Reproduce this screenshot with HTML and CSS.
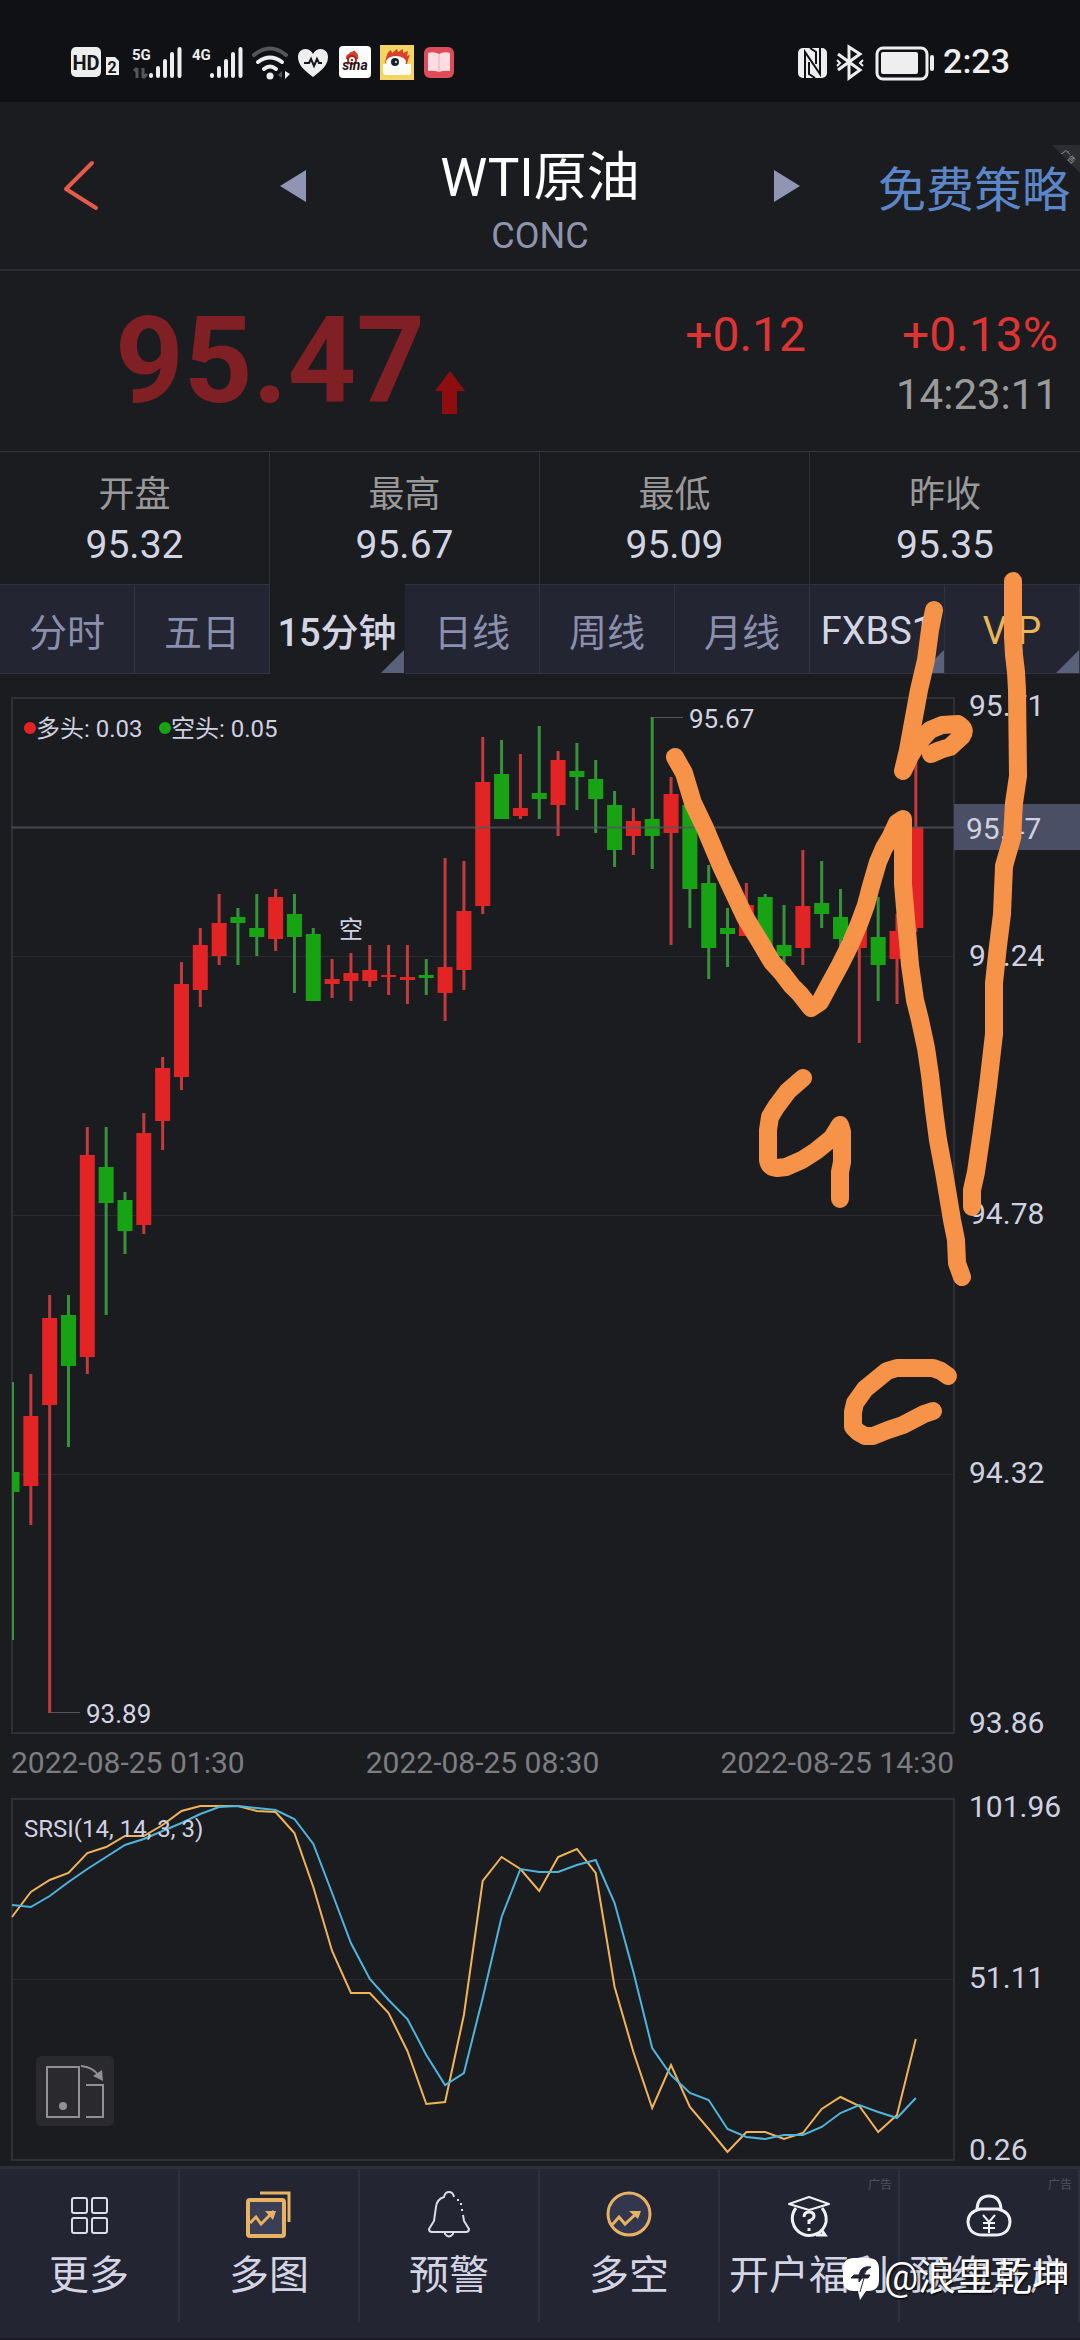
FILE: index.html
```html
<!DOCTYPE html>
<html lang="zh-CN">
<head>
    <meta charset="UTF-8">
    <meta name="viewport" content="width=device-width, initial-scale=1.0">
    <title>WTI原油 CONC</title>
    <link rel="stylesheet" href="styles.css">
</head>
<body>
    <div class="status-bar">
        <svg class="status-left" viewBox="70 40 390 42" width="390" height="42" aria-hidden="true">
            <rect x="71" y="47" width="30" height="30" rx="5" fill="#eee"/>
            <text x="86" y="70" class="st-hd">HD</text>
            <path d="M106 57h9l4 4v14h-13z" fill="#eee"/>
            <text x="112" y="73" class="st-sim">2</text>
            <text x="132" y="60" class="st-net">5G</text>
            <path d="M137 68v10M134 71l3-3M143 68v10M143 78l4-4" stroke="#55565a" stroke-width="3" fill="none"/>
            <path d="M151 75v1M158 68v8M165 61v15M172 54v22M179.500 49v27" class="bars"/>
            <text x="192" y="60" class="st-net">4G</text>
            <path d="M212 75v1M219 68v8M226 61v15M233 54v22M240.500 49v27" class="bars"/>
            <path d="M254 55q16-13 32 0" stroke="#55565a" stroke-width="4" fill="none" stroke-linecap="round"/>
            <path d="M258 62q12-9 24 0M264 69q6-5 12 0" stroke="#eee" stroke-width="4" fill="none" stroke-linecap="round"/>
            <circle cx="270" cy="76" r="3.500" fill="#eee"/>
            <path d="M278 75l4-4v7z" fill="#55565a"/>
            <path d="M285 71v8l5-5z" fill="#eee"/>
            <path d="M313 77C304 70 298 65 298 57c0-9 11-11 15-3 4-8 15-6 15 3 0 8-6 13-15 20z" fill="#eee"/>
            <path d="M304 63h5l2-4 3 7 3-7 2 4h3" stroke="#15161a" stroke-width="2" fill="none"/>
            <rect x="339" y="46" width="32" height="32" rx="4" fill="#fff"/>
            <path d="M346 59c0-7 3-3 4-7 2 1 3-2 5-1 2 3 4 3 3 8z" fill="#d0402e"/>
            <circle cx="352" cy="60" r="4" fill="#fff" stroke="#a22" stroke-width="2"/>
            <text x="355" y="70" class="st-sina">sina</text>
            <rect x="380" y="45" width="34" height="35" fill="#f2d564"/>
            <path d="M383 64h28v8q0 3-3 3h-22q-3 0-3-3z" fill="#fffdf4"/>
            <path d="M385 63q2-12 6-13l1 3 5-4 1 3 5-3 0 4 5-2-1 5 3-1q-2 4-3 9z" fill="#d8402a"/>
            <ellipse cx="396" cy="62" rx="10" ry="6" fill="#fff"/>
            <circle cx="395" cy="62" r="4" fill="#16242c"/>
            <circle cx="396" cy="62" r="1" fill="#fff"/>
            <rect x="424" y="47" width="30" height="31" rx="6" fill="#dd4c58"/>
            <path d="M428 53q6-2 11 1 5-3 11-1v18q-6-1-11 1-5-2-11-1z" fill="#ffdce0"/>
            <path d="M439 54v18" stroke="#f7a9b2" stroke-width="1"/>
        </svg>
        <div class="status-right">
            <svg viewBox="796 40 140 42" width="140" height="42" aria-hidden="true">
                <rect x="797" y="48" width="29" height="30" rx="5" fill="#eee"/>
                <path d="M804 78V52l15 22V48" fill="none" stroke="#111216" stroke-width="2"/>
                <path d="M808 62v12l6 4M815 64V52l-6-4" fill="none" stroke="#111216" stroke-width="2"/>
                <path d="M837 54l22 16-11 8V47l11 7-22 16" fill="none" stroke="#eee" stroke-width="3"/>
                <path d="M836 60l3 3-3 3M862 60l-3 3 3 3" fill="none" stroke="#eee" stroke-width="2"/>
                <rect x="876" y="48" width="50" height="31" rx="6" fill="none" stroke="#eee" stroke-width="3"/>
                <rect x="880" y="52" width="37" height="22" rx="2" fill="#eee"/>
                <path d="M931 57v12" stroke="#eee" stroke-width="4" stroke-linecap="round"/>
            </svg>
            <span class="clock">2:23</span>
        </div>
    </div>

    <header class="header">
        <button class="btn-back" aria-label="返回">
            <svg viewBox="0 0 44 56" width="44" height="56"><path d="M32 5L6 31l30 19" fill="none" stroke="#e45a4b" stroke-width="4" stroke-linecap="round" stroke-linejoin="round"/></svg>
        </button>
        <div class="symbol">
            <button aria-label="上一个"><svg viewBox="0 0 26 32" width="26" height="32"><path d="M26 0v32L0 16z" fill="#8f95b2"/></svg></button>
            <div class="symbol-name">
                <h1>WTI原油</h1>
                <p>CONC</p>
            </div>
            <button aria-label="下一个"><svg viewBox="0 0 26 32" width="26" height="32"><path d="M0 0v32l26-16z" fill="#8f95b2"/></svg></button>
        </div>
        <a class="strategy" href="#">免费策略</a>
        <svg class="corner-ad" viewBox="0 0 28 28" width="28" height="28"><path d="M0 0h28v28z" fill="#2c2d31"/><text x="9" y="8" transform="rotate(45 9 8)">广告</text></svg>
    </header>

    <section class="quote">
        <div class="price">
            <span>95.47</span>
            <svg viewBox="0 0 30 44" width="30" height="44"><path d="M15 0l15 20h-8v23H7V20H0z" fill="#8f0d10"/></svg>
        </div>
        <div class="change">
            <div class="change-row"><span>+0.12</span><span>+0.13%</span></div>
            <time>14:23:11</time>
        </div>
    </section>

    <dl class="stats">
        <div><dt>开盘</dt><dd>95.32</dd></div>
        <div><dt>最高</dt><dd>95.67</dd></div>
        <div><dt>最低</dt><dd>95.09</dd></div>
        <div><dt>昨收</dt><dd>95.35</dd></div>
    </dl>

    <main class="chart-area">
        <nav class="tabs">
            <button>分时</button>
            <button>五日</button>
            <button class="active more">15分钟</button>
            <button>日线</button>
            <button>周线</button>
            <button>月线</button>
            <button class="light more">FXBS1</button>
            <button class="vip more">VIP</button>
        </nav>

        <svg class="kline" viewBox="0 674 1080 1069">
            <path class="grid" d="M12 956.500H954M12 1215.500H954M12 1474.500H954"/>
            <rect class="frame" x="12" y="698" width="942" height="1035"/>
            <g id="candles"></g>
            <path class="last-line" d="M12 827.500H954"/>
            <path class="leader" d="M653 717.500H683M51 1712.500H80"/>
            <circle cx="30" cy="728" r="6" fill="#e32424"/>
            <circle cx="165" cy="728" r="6" fill="#18a314"/>
            <g class="legend">
                <text x="36" y="737">多头: 0.03</text>
                <text x="171" y="737">空头: 0.05</text>
                <text x="339" y="938">空</text>
            </g>
            <g class="extreme">
                <text x="689" y="728">95.67</text>
                <text x="86" y="1723">93.89</text>
            </g>
            <rect x="954" y="804" width="126" height="46" fill="#4a4f65"/>
            <g class="axis">
                <text x="969" y="716">95.71</text>
                <text x="966" y="839">95.47</text>
                <text x="969" y="966">95.24</text>
                <text x="969" y="1224">94.78</text>
                <text x="969" y="1483">94.32</text>
                <text x="969" y="1733">93.86</text>
            </g>
        </svg>

        <div class="dates">
            <time>2022-08-25 01:30</time>
            <time>2022-08-25 08:30</time>
            <time>2022-08-25 14:30</time>
        </div>

        <div class="indicator">
            <svg class="srsi" viewBox="0 1783 1080 383">
                <path class="grid" d="M12 1979.500H954"/>
                <rect class="frame" x="12" y="1799" width="942" height="361"/>
                <polyline id="srsi-k" stroke="#f0b456"/>
                <polyline id="srsi-d" stroke="#4fb4dc"/>
                <text class="legend" x="24" y="1837">SRSI(14, 14, 3, 3)</text>
                <g class="axis">
                    <text x="969" y="1817">101.96</text>
                    <text x="969" y="1988">51.11</text>
                    <text x="969" y="2160">0.26</text>
                </g>
            </svg>
            <button class="btn-rotate" aria-label="横屏">
                <svg viewBox="0 0 78 70" width="78" height="70" fill="none" stroke="#909095" stroke-width="2">
                    <rect x="11" y="11" width="32" height="50"/>
                    <path d="M50 29h17v32H50M45 10q12 1 18 10"/>
                    <circle cx="27" cy="50" r="4" fill="#909095" stroke="none"/>
                    <path d="M57 20l9-6 1 11z" fill="#909095" stroke="none"/>
                </svg>
            </button>
        </div>

        <!-- 手绘走势标注 -->
        <svg class="drawing" viewBox="0 584 1080 1000" aria-hidden="true">
            <path d="M675 757L684 773 693 803 705 828 721 866 745 917 759 940 772 962 782 973 792 986 800 994 811 1008 820 1002 828 987 840 965 850 945 859 924 866 905 871 886 878 862 884 848 890 838 897 823 903 819 903 884 907 931 910 965 915 1000 920 1020 926 1048 930 1075 934 1110 938 1140 944 1172 952 1220 956 1240 957 1263 962 1277"/>
            <path d="M803 1078L788 1091 776 1107 770 1117 768 1130 768 1160Q769 1167 777 1168L786 1167 802 1160 816 1151 832 1138 840 1125 842 1132 842 1162 840 1172V1199"/>
            <path d="M934 610L930 630 926 660 919 690 912 728 908 750 903 771 910 756 919 742 930 730 942 725 958 724Q967 729 962 736L950 747 940 750 931 754"/>
            <path d="M1013 581V637L1014 655 1016 672 1017 690 1018 776 1014 803 1012 838 1004 866 1002 914 998 946 994 983V1034L988 1086 982 1131 976 1172 972 1190V1207"/>
            <path d="M948 1376L941 1371 933 1368H897L887 1371 865 1389 855 1403 853 1412V1427L858 1432 865 1436H873L888 1430 903 1425 924 1414 933 1411"/>
        </svg>
    </main>

    <footer class="toolbar">
        <a href="#">
            <svg viewBox="0 0 48 48" width="48" height="48" fill="none" stroke="#dcdde8" stroke-width="2"><rect x="7" y="8" width="15" height="15" rx="2"/><rect x="27" y="8" width="15" height="15" rx="2"/><rect x="7" y="28" width="15" height="15" rx="2"/><rect x="27" y="28" width="15" height="15" rx="2"/></svg>
            <span>更多</span>
        </a>
        <a href="#">
            <svg viewBox="0 0 48 48" width="48" height="48" fill="none" stroke="#e7b263" stroke-width="4"><path d="M15 3h29v29" stroke-width="3"/><rect x="3" y="10" width="36" height="36" rx="2" fill="#3b3f55"/><path d="M5 33l6-6 5 7 13-13" stroke-width="3"/><path d="M20 21h11l-3 9z" fill="#e7b263" stroke="none"/></svg>
            <span>多图</span>
        </a>
        <a href="#">
            <svg viewBox="0 0 48 48" width="48" height="48" fill="none" stroke="#dcdde8" stroke-width="2"><path d="M29 7Q28 2 24 2T19 7Q12 9 11 17L9 31 4 39Q4 42 7 42H41Q44 42 44 39L39 31 38 25"/><path d="M20 43v1q4 5 8 0v-1"/><path d="M33 9v2M36 13v2M37 19v2"/></svg>
            <span>预警</span>
        </a>
        <a href="#">
            <svg viewBox="0 0 48 48" width="48" height="48" fill="none" stroke="#e7b263" stroke-width="3"><circle cx="24" cy="24" r="21" fill="#33374d"/><path d="M7 35l7-8 6 7 13-12"/><path d="M24 21h12l-3 8z" fill="#e7b263" stroke="none"/></svg>
            <span>多空</span>
        </a>
        <a href="#">
            <small>广告</small>
            <svg viewBox="0 0 48 48" width="48" height="48" fill="none" stroke="#f0f0f5" stroke-width="3"><path d="M4 14l20-7 20 7-20 6z" stroke-width="2" stroke-linejoin="round"/><path d="M11 18a17 17 0 1 0 30 14q1-8-4-14M36 39l4 6-9 0" /><path d="M19 27q0-5 5-5t5 4q0 3-5 5v3M24 38v3"/></svg>
            <span>开户福利</span>
        </a>
        <a href="#">
            <small>广告</small>
            <svg viewBox="0 0 48 48" width="48" height="48" fill="none" stroke="#f0f0f5" stroke-width="3"><path d="M12 19Q13 6 24 6T36 19"/><path d="M15 19h18q12 3 12 13-1 13-15 13H18Q4 45 3 32 3 22 15 19z"/><path d="M18 25l6 7 6-7M24 32v11M18 33h12M18 38h12" stroke-width="2"/></svg>
            <span>预约开户</span>
        </a>
        <div class="author">
            <svg viewBox="0 0 38 46" width="38" height="46"><path d="M12 2h14q11 0 11 11v12q0 9-10 10h-3l-6 9-2-9h-4Q1 35 1 24V13Q1 2 12 2z" fill="#fff"/><path d="M29 11q-10-2-12 8h-5l-3 3h8v4l3-4h6l2-3h-6q1-5 7-8zM22 22l-4 14" fill="#232532" stroke="#232532"/></svg>
            <span>@浪里乾坤</span>
        </div>
    </footer>

    <script src="script.js"></script>
</body>
</html>
```
FILE: styles.css
```css
* {
    box-sizing: border-box;
}

body {
    margin: 0;
    background: #1b1c20;
    color: #d3d5e4;
    font-family: Roboto, "Noto Sans CJK SC", sans-serif;
}

button {
    margin: 0;
    padding: 0;
    border: none;
    background: none;
    color: inherit;
    font: inherit;
}

a {
    color: inherit;
    text-decoration: none;
}

svg {
    display: block;
}

h1, p, dl, dd {
    margin: 0;
}

/* 状态栏 */
.status-bar {
    display: flex;
    justify-content: space-between;
    align-items: center;
    height: 102px;
    padding: 20px 70px 0;
    background: #101115;
}

.status-right {
    display: flex;
    align-items: center;
    gap: 6px;
}

.clock {
    color: #eee;
    font-size: 34px;
    font-weight: 500;
    line-height: 42px;
}

.st-hd {
    font-size: 20px;
    font-weight: 700;
    text-anchor: middle;
    fill: #15161a;
}

.st-sim {
    font-size: 16px;
    font-weight: 700;
    text-anchor: middle;
    fill: #15161a;
}

.st-net {
    font-size: 15px;
    font-weight: 700;
    fill: #eee;
}

.st-sina {
    font-size: 14px;
    font-style: italic;
    font-weight: 700;
    text-anchor: middle;
    fill: #2a1414;
}

.bars {
    fill: none;
    stroke: #eee;
    stroke-width: 4;
    stroke-linecap: round;
}

/* 标题 */
.header {
    position: relative;
    display: grid;
    grid-template-columns: 1fr 520px 1fr;
    align-items: center;
    height: 169px;
    border-bottom: 2px solid #2b2c31;
}

.btn-back {
    justify-self: start;
    margin-left: 60px;
}

.symbol {
    display: flex;
    justify-content: space-between;
    align-items: center;
}

.symbol-name {
    padding-top: 32px;
    text-align: center;
}

.symbol-name h1 {
    color: #fff;
    font-size: 53px;
    font-weight: 400;
    line-height: 68px;
}

.symbol-name p {
    color: #8f94ac;
    font-size: 36px;
    line-height: 48px;
}

.strategy {
    justify-self: end;
    padding-right: 10px;
    color: #5b86c8;
    font-size: 48px;
}

.corner-ad {
    position: absolute;
    top: 43px;
    right: 0;
    font-size: 8px;
    fill: #999;
}

/* 最新价 */
.quote {
    display: flex;
    justify-content: space-between;
    height: 181px;
    padding: 30px 22px 0 115px;
    border-bottom: 1px solid #35363b;
}

.price {
    display: flex;
    align-items: flex-end;
    align-self: flex-start;
    gap: 10px;
    color: #802024;
    font-size: 120px;
    font-weight: 700;
    line-height: 120px;
}

.price svg {
    margin-bottom: 6px;
}

.change {
    padding-top: 4px;
    text-align: right;
    line-height: 60px;
}

.change-row {
    display: flex;
    gap: 96px;
    color: #de3433;
    font-size: 48px;
}

.change time {
    display: block;
    color: #9a9a9a;
    font-size: 42px;
}

/* 开高低收 */
.stats {
    display: grid;
    grid-template-columns: repeat(4, 1fr);
    height: 132px;
    text-align: center;
}

.stats div {
    padding-top: 18px;
    border-right: 1px solid #303136;
}

.stats div:last-child {
    border-right: none;
}

.stats dt {
    color: #999;
    font-size: 36px;
    line-height: 50px;
}

.stats dd {
    font-size: 39px;
    line-height: 50px;
}

/* 周期切换 */
.chart-area {
    position: relative;
}

.tabs {
    display: grid;
    grid-template-columns: repeat(8, 1fr);
    height: 90px;
}

.tabs button {
    position: relative;
    overflow: hidden;
    border: 1px solid #303240;
    border-left: none;
    background: #232532;
    color: #8a8fae;
    font-size: 38px;
    white-space: nowrap;
}

.tabs .active {
    border-color: #1b1c20;
    background: #1b1c20;
    color: #d3d5e4;
    font-weight: 500;
}

.tabs .light,
.tabs .vip {
    padding-top: 4px;
}

.tabs .light {
    color: #d3d5e4;
}

.tabs .vip {
    color: #e9b65a;
}

.more::after {
    content: "";
    position: absolute;
    right: 0;
    bottom: 0;
    border-bottom: 23px solid #5a617b;
    border-left: 23px solid transparent;
}

/* 图表 */
.kline,
.srsi {
    width: 100%;
    height: auto;
}

.frame {
    fill: none;
    stroke: #303136;
    stroke-width: 2;
}

.grid {
    stroke: #292b2f;
    stroke-width: 1;
}

.last-line {
    stroke: #55565c;
    stroke-width: 2;
    opacity: 0.8;
}

.leader {
    stroke: #55565c;
    stroke-width: 1;
}

.up {
    fill: #e32424;
}

.up-wick {
    fill: #c43a3d;
}

.down {
    fill: #18a314;
}

.down-wick {
    fill: #36933a;
}

.legend {
    fill: #d0d1e0;
    font-size: 24px;
}

.extreme {
    fill: #d3d5e4;
    font-size: 26px;
}

.axis {
    fill: #cfd1e0;
    font-size: 30px;
}

.dates {
    display: flex;
    justify-content: space-between;
    height: 40px;
    padding: 0 126px 0 11px;
    color: #7d7e82;
    font-size: 30px;
    line-height: 40px;
}

.indicator {
    position: relative;
}

#srsi-k,
#srsi-d {
    fill: none;
    stroke-width: 2;
}

.btn-rotate {
    position: absolute;
    bottom: 40px;
    left: 36px;
    border-radius: 5px;
    background: #29292e;
}

.drawing {
    position: absolute;
    top: 0;
    left: 0;
    width: 100%;
    height: auto;
    overflow: visible;
    pointer-events: none;
    fill: none;
    stroke: #f69348;
    stroke-width: 18;
    stroke-linecap: round;
    stroke-linejoin: round;
}

/* 底部工具栏 */
.toolbar {
    position: relative;
    display: grid;
    grid-template-columns: repeat(6, 1fr);
    padding-bottom: 16px;
    border-top: 3px solid #2e2f3a;
    background: #232532;
}

.toolbar a {
    position: relative;
    display: flex;
    flex-direction: column;
    align-items: center;
    gap: 12px;
    height: 153px;
    padding-top: 21px;
    border-right: 2px solid #2f303a;
    font-size: 40px;
    line-height: 52px;
    white-space: nowrap;
}

.toolbar small {
    position: absolute;
    top: 8px;
    right: 6px;
    color: #50515c;
    font-size: 12px;
    line-height: 16px;
}

.author {
    position: absolute;
    right: 10px;
    bottom: 36px;
    display: flex;
    align-items: flex-end;
    gap: 4px;
    color: #fff;
    font-size: 38px;
    line-height: 50px;
    text-shadow: 1px 1px 2px #000;
}
```
FILE: script.js
```js
// [最高, 实体上沿, 实体下沿, 最低, 涨跌]
const candles = [
    [1382, 1472, 1492, 1640, 0],
    [1374, 1416, 1486, 1525, 1],
    [1295, 1318, 1405, 1713, 1],
    [1295, 1315, 1366, 1447, 0],
    [1127, 1155, 1357, 1374, 1],
    [1127, 1167, 1203, 1315, 0],
    [1192, 1200, 1231, 1254, 0],
    [1113, 1133, 1225, 1234, 1],
    [1057, 1068, 1121, 1150, 1],
    [962, 984, 1077, 1090, 1],
    [928, 945, 990, 1007, 1],
    [894, 923, 956, 965, 1],
    [908, 917, 923, 965, 0],
    [894, 928, 937, 956, 0],
    [889, 897, 939, 951, 1],
    [894, 914, 937, 993, 0],
    [928, 934, 1001, 1001, 0],
    [959, 979, 984, 998, 1],
    [953, 973, 981, 1001, 1],
    [945, 970, 981, 987, 1],
    [945, 975, 977, 995, 1],
    [945, 977, 980, 1004, 1],
    [959, 975, 978, 995, 0],
    [858, 967, 993, 1021, 1],
    [861, 911, 970, 990, 1],
    [737, 782, 906, 914, 1],
    [740, 774, 819, 819, 0],
    [754, 808, 816, 819, 1],
    [726, 793, 799, 819, 0],
    [751, 760, 805, 836, 1],
    [743, 771, 777, 810, 0],
    [760, 779, 799, 833, 0],
    [791, 805, 850, 867, 0],
    [808, 821, 836, 855, 1],
    [717, 819, 836, 869, 0],
    [777, 794, 833, 945, 1],
    [790, 805, 889, 928, 0],
    [865, 883, 948, 979, 0],
    [908, 928, 934, 967, 0],
    [883, 905, 936, 936, 1],
    [894, 897, 952, 952, 0],
    [905, 945, 956, 966, 0],
    [850, 906, 948, 965, 1],
    [861, 903, 914, 928, 0],
    [889, 917, 939, 950, 0],
    [908, 917, 948, 1043, 1],
    [897, 937, 965, 1001, 0],
    [914, 931, 959, 1004, 1],
    [750, 827, 928, 932, 1]
];

const srsiK = [1917, 1892, 1880, 1873, 1853, 1847, 1836, 1836, 1825, 1811, 1806, 1806, 1806, 1811, 1812, 1833, 1887,
    1951, 1993, 1993, 2013, 2051, 2104, 2102, 2015, 1881, 1857, 1869, 1891, 1857, 1849, 1873, 1987, 2052, 2108, 2065,
    2107, 2129, 2152, 2132, 2132, 2139, 2133, 2109, 2097, 2106, 2132, 2115, 2039];
const srsiD = [1905, 1907, 1896, 1882, 1869, 1857, 1845, 1839, 1831, 1823, 1814, 1807, 1806, 1808, 1810, 1819, 1844,
    1893, 1943, 1979, 2000, 2019, 2055, 2085, 2073, 1998, 1917, 1869, 1872, 1872, 1865, 1860, 1903, 1972, 2048, 2075,
    2093, 2100, 2129, 2137, 2139, 2135, 2135, 2127, 2113, 2105, 2112, 2118, 2098];

const left = 12;
const step = 18.83;

function addRect(parent, x, y, width, height, cls) {
    const rect = document.createElementNS('http://www.w3.org/2000/svg', 'rect');
    rect.setAttribute('x', x);
    rect.setAttribute('y', y);
    rect.setAttribute('width', width);
    rect.setAttribute('height', height);
    rect.setAttribute('class', cls);
    parent.appendChild(rect);
}

function drawCandles() {
    const group = document.getElementById('candles');
    candles.forEach(([high, top, bottom, low, up], i) => {
        const x = left + i * step;
        const cls = up ? 'up' : 'down';
        // 第一根只显示右半边
        const wickX = i === 0 ? left : x - 1.5;
        const bodyX = i === 0 ? left : x - 7.5;
        addRect(group, wickX, high, i === 0 ? 2 : 3, low - high, cls + '-wick');
        addRect(group, bodyX, top, i === 0 ? 7.5 : 15, bottom - top, cls);
    });
}

function drawLine(id, values) {
    const points = values.map((y, i) => `${(left + i * step).toFixed(1)},${y}`);
    document.getElementById(id).setAttribute('points', points.join(' '));
}

drawCandles();
drawLine('srsi-k', srsiK);
drawLine('srsi-d', srsiD);
```
